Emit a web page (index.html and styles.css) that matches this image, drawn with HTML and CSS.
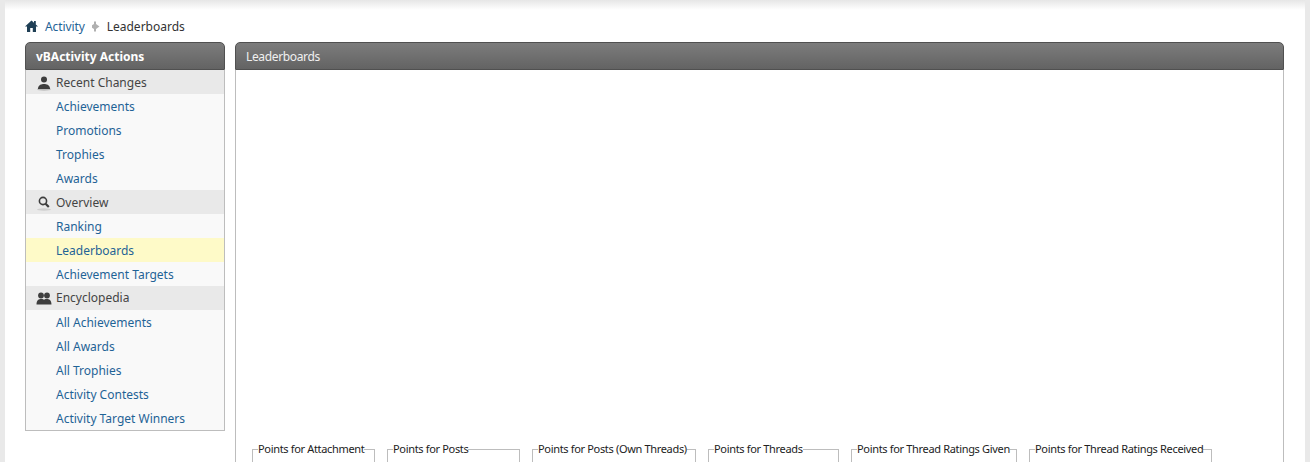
FILE: index.html
```html
<!DOCTYPE html>
<html lang="en">
<head>
  <meta charset="UTF-8" />
  <title>Leaderboards</title>
  <link rel="stylesheet" href="styles.css">
</head>
<body>
  <div class="page">
    <div class="breadcrumb">
      <svg class="home-icon" width="13" height="12" viewBox="0 0 13 12"><path d="M6.5 0.5 L0 6.5 H2 V12 H5.2 V8 H7.8 V12 H11 V6.5 H13 L10.8 4.4 V1 H9 V2.8 Z" fill="#1f3f55"/></svg>
      <a href="#">Activity</a>
      <svg class="crumb-arrow" width="9" height="11" viewBox="0 0 9 11"><path d="M3 0.5 H5 V3 L8.5 5.5 L5 8 V10.5 H3 V8 L1 6.8 V4.2 L3 3 Z" fill="#b0b0b0"/></svg>
      <span>Leaderboards</span>
    </div>

    <div class="content">
      <div class="sidebar">
        <h2 class="block-head side-head">vBActivity Actions</h2>
        <ul class="side-list">
          <li class="group">
            <svg width="16" height="16" viewBox="0 0 16 16"><ellipse cx="8" cy="14.5" rx="7" ry="1.2" fill="#bdbdbd"/><circle cx="8" cy="4.5" r="3" fill="#3d3d3d"/><path d="M1.8 14 C2.5 9.5 5.5 9 8 9 C10.5 9 13.5 9.5 14.2 14 Z" fill="#3d3d3d"/></svg>
            Recent Changes
          </li>
          <li><a href="#">Achievements</a></li>
          <li><a href="#">Promotions</a></li>
          <li><a href="#">Trophies</a></li>
          <li><a href="#">Awards</a></li>
          <li class="group">
            <svg width="16" height="16" viewBox="0 0 16 16"><ellipse cx="8" cy="14.5" rx="7" ry="1.2" fill="#cfcfcf"/><circle cx="7" cy="6" r="3.6" fill="none" stroke="#3d3d3d" stroke-width="1.6"/><path d="M9.6 8.7 L12.8 12" stroke="#3d3d3d" stroke-width="2.2"/></svg>
            Overview
          </li>
          <li><a href="#">Ranking</a></li>
          <li class="active"><a href="#">Leaderboards</a></li>
          <li><a href="#">Achievement Targets</a></li>
          <li class="group group-tight">
            <svg width="16" height="16" viewBox="0 0 16 16"><circle cx="5" cy="5.5" r="2.9" fill="#3d3d3d"/><circle cx="11" cy="5.5" r="2.9" fill="#3d3d3d"/><path d="M0.5 14.5 C0.5 10 3 9 5 9 C7 9 8 9.6 8 10 C8 9.6 9 9 11 9 C13 9 15.5 10 15.5 14.5 Z" fill="#3d3d3d"/></svg>
            Encyclopedia
          </li>
          <li><a href="#">All Achievements</a></li>
          <li><a href="#">All Awards</a></li>
          <li><a href="#">All Trophies</a></li>
          <li><a href="#">Activity Contests</a></li>
          <li><a href="#">Activity Target Winners</a></li>
        </ul>
      </div>

      <div class="main">
        <h2 class="block-head main-head">Leaderboards</h2>
        <div class="main-body">
          <fieldset class="board w-attachment"><legend>Points for Attachment</legend></fieldset>
          <fieldset class="board w-posts"><legend>Points for Posts</legend></fieldset>
          <fieldset class="board w-own"><legend>Points for Posts (Own Threads)</legend></fieldset>
          <fieldset class="board w-threads"><legend>Points for Threads</legend></fieldset>
          <fieldset class="board w-given"><legend>Points for Thread Ratings Given</legend></fieldset>
          <fieldset class="board w-received"><legend>Points for Thread Ratings Received</legend></fieldset>
        </div>
      </div>
    </div>
  </div>
</body>
</html>
```

FILE: styles.css
```css
* { margin: 0; padding: 0; box-sizing: border-box; }

html, body {
  height: 462px;
  overflow: hidden;
}

body {
  font-family: "Noto Sans", sans-serif;
  font-size: 12px;
  color: #333;
  background: #e9e9e9;
}

a {
  color: #1f6396;
  text-decoration: none;
}

.page {
  margin: 0 5px;
  height: 462px;
  padding: 14px 20px 0;
  background: linear-gradient(#e6e6e6, #ffffff 10px);
}

.breadcrumb {
  height: 28px;
  display: flex;
  align-items: center;
  padding-bottom: 4px;
}

.home-icon { margin-right: 7px; }
.breadcrumb a { letter-spacing: -0.1px; }
.crumb-arrow { margin: 0 7px 0 6px; }
.breadcrumb span { color: #333; }

.content {
  display: flex;
  gap: 10px;
}

.sidebar {
  width: 200px;
  flex-shrink: 0;
}

.block-head {
  height: 28px;
  line-height: 27px;
  font-size: 12px;
  color: #fff;
  background: linear-gradient(#7c7c7c, #636363);
  border: 1px solid #505050;
  border-radius: 5px 5px 0 0;
}

.side-head {
  font-weight: bold;
  padding-left: 10px;
}

.main-head {
  font-weight: normal;
  padding-left: 10px;
  letter-spacing: -0.35px;
  color: #f0f0f0;
}

.side-list {
  list-style: none;
  background: #f9f9f9;
  border: 1px solid #bdbdbd;
  border-top: none;
  height: 361px;
}

.side-list li {
  height: 24px;
  line-height: 26px;
  padding-left: 30px;
}

.side-list .group {
  display: flex;
  align-items: center;
  background: #e9e9e9;
  color: #444;
  padding: 2px 0 0 10px;
  line-height: 24px;
}

.side-list .group-tight {
  padding-top: 0;
}

.side-list .group svg {
  margin-right: 4px;
}

.side-list .active {
  background: #fefac8;
}

.main {
  width: 1049px;
}

.main-body {
  height: 400px;
  padding: 372px 0 0 16px;
  background: #fff;
  border: 1px solid #bdbdbd;
  border-top: none;
  display: flex;
  gap: 12px;
}

.board {
  height: 60px;
  flex-shrink: 0;
  border: 1px solid #bdbdbd;
  padding-left: 5px;
}

.board legend {
  color: #222;
  font-size: 11px;
  line-height: 14px;
  white-space: nowrap;
  letter-spacing: -0.33px;
}

.w-attachment { width: 123px; }
.w-posts { width: 133px; }
.w-own { width: 164px; }
.w-threads { width: 131px; }
.w-given { width: 166px; }
.w-received { width: 183px; }
```
